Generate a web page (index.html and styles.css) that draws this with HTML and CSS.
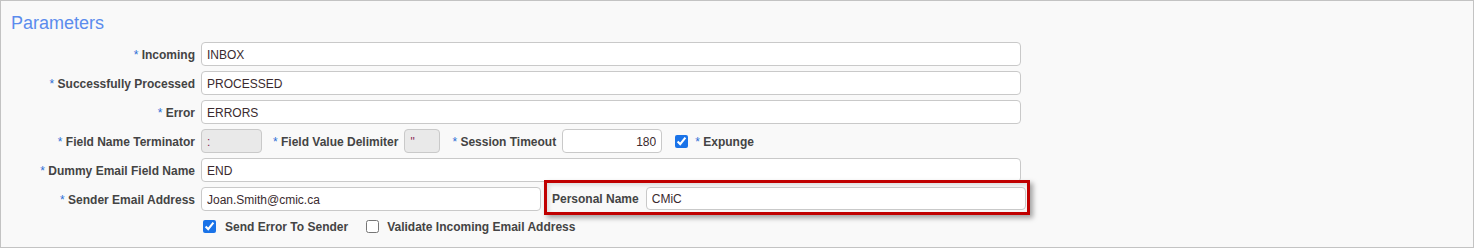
FILE: index.html
```html
<!DOCTYPE html>
<html lang="en">
<head>
  <meta charset="UTF-8" />
  <title>Parameters</title>
  <link rel="stylesheet" href="styles.css">
</head>
<body>
  <div class="panel">
    <h2 class="title">Parameters</h2>

    <div class="row">
      <label class="lbl"><span class="req">*</span> Incoming</label>
      <input class="field wide" type="text" value="INBOX">
    </div>
    <div class="row">
      <label class="lbl"><span class="req">*</span> Successfully Processed</label>
      <input class="field wide" type="text" value="PROCESSED">
    </div>
    <div class="row">
      <label class="lbl"><span class="req">*</span> Error</label>
      <input class="field wide" type="text" value="ERRORS">
    </div>
    <div class="row">
      <label class="lbl"><span class="req">*</span> Field Name Terminator</label>
      <input class="field ro term" type="text" value=":" readonly>
      <label class="inline-lbl"><span class="req">*</span> Field Value Delimiter</label>
      <input class="field ro delim" type="text" value="&quot;" readonly>
      <label class="inline-lbl timeout-lbl"><span class="req">*</span> Session Timeout</label>
      <input class="field timeout" type="text" value="180">
      <input class="chk expunge" type="checkbox" checked>
      <label class="chk-lbl bold"><span class="req">*</span> Expunge</label>
    </div>
    <div class="row">
      <label class="lbl"><span class="req">*</span> Dummy Email Field Name</label>
      <input class="field wide" type="text" value="END">
    </div>
    <div class="row top">
      <label class="lbl"><span class="req">*</span> Sender Email Address</label>
      <input class="field sender" type="text" value="Joan.Smith@cmic.ca">
      <div class="callout">
        <label class="bold">Personal Name</label>
        <input class="field personal" type="text" value="CMiC">
      </div>
    </div>
    <div class="row checks">
      <input class="chk first" type="checkbox" checked>
      <label class="chk-lbl bold">Send Error To Sender</label>
      <input class="chk second" type="checkbox">
      <label class="chk-lbl bold">Validate Incoming Email Address</label>
    </div>
  </div>
</body>
</html>
```

FILE: styles.css
```css
* { box-sizing: border-box; }
html, body {
  margin: 0;
  padding: 0;
  background: #fff;
  font-family: 'Liberation Sans', Arial, sans-serif;
  font-size: 12px;
  color: #444;
}
.panel {
  height: 248px;
  border: 1px solid #c3c3c3;
  background: #f9f9f9;
  padding: 11px 0 0 0;
}
.title {
  margin: 0 0 8px 10px;
  font-size: 18px;
  line-height: 22px;
  font-weight: 400;
  color: #5b8ced;
}
.row {
  display: flex;
  align-items: center;
  height: 24px;
  margin-bottom: 5px;
}
.row.top { align-items: flex-start; }
.lbl {
  width: 194px;
  margin-right: 6px;
  padding-top: 2px;
  line-height: 24px;
  text-align: right;
  font-weight: 700;
  white-space: nowrap;
}
.row.top .lbl { align-self: center; }
.bold { font-weight: 700; white-space: nowrap; }
.req { color: #2f6fd6; font-weight: 400; }
.field {
  height: 24px;
  border: 1px solid #c9c9c9;
  border-radius: 4px;
  background: #fff;
  padding: 1px 5px 0;
  font-family: 'Liberation Sans', Arial, sans-serif;
  font-size: 12px;
  color: #3a2a2e;
  outline: none;
}
.field.ro { background: #e9e9e9; color: #8a2a55; }
.wide { width: 820px; }
.term { width: 61px; }
.delim { width: 36px; }
.timeout { width: 100px; text-align: right; }
.sender { width: 340px; }
.inline-lbl {
  font-weight: 700;
  white-space: nowrap;
  margin: 1px 6px 0 11px;
}
.timeout-lbl { margin-left: 12px; }
.chk {
  width: 13px;
  height: 13px;
  margin: 0;
  accent-color: #1a73e8;
}
.expunge { margin-left: 13px; }
.chk-lbl { margin-left: 7px; padding-top: 1px; }
.checks { height: 20px; }
.checks .first { margin-left: 202px; }
.checks .first + .chk-lbl { margin-left: 9px; }
.checks .second { margin-left: 18px; }
.checks .second + .chk-lbl { margin-left: 8px; }

.callout {
  display: flex;
  align-items: center;
  gap: 7px;
  margin: -7px 0 -5px 3px;
  padding: 4px 1px 2px 5px;
  border: 3px solid #c00000;
  box-shadow: 3px 3px 5px rgba(0, 0, 0, 0.35), inset 2px 2px 4px rgba(0, 0, 0, 0.12);
}
.personal { width: 380px; height: 23px; }
```
